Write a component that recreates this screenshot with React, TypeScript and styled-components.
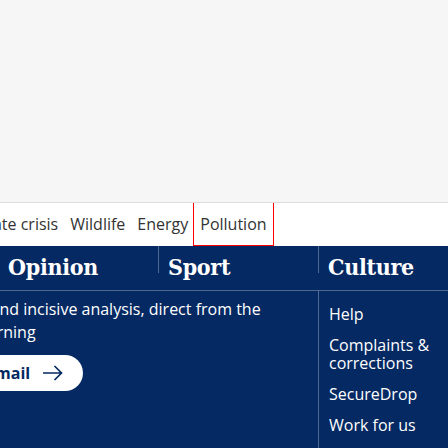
import React from "react";
import styled, { createGlobalStyle } from "styled-components";

const GlobalStyle = createGlobalStyle`
  html, body {
    margin: 0;
    padding: 0;
    background: #f6f6f6;
    overflow: hidden;
  }
  * { box-sizing: border-box; }
`;

const Page = styled.div`
  width: 448px;
  height: 448px;
  display: flex;
  flex-direction: column;
  overflow: hidden;
  font-family: "Open Sans", "Liberation Sans", Arial, sans-serif;
`;

const TopArea = styled.div`
  height: 202px;
  flex: none;
  background: #f6f6f6;
`;

const SubNav = styled.nav`
  flex: none;
  height: 44px;
  background: #ffffff;
  border-top: 1px solid #dcdcdc;
  overflow: hidden;
`;

const SubNavList = styled.ul`
  display: flex;
  margin: 0 0 0 -46px;
  padding: 0;
  list-style: none;
  height: 43px;
`;

const SubNavItem = styled.li<{ $focused?: boolean }>`
  flex: none;
  padding: 0 6px;
  height: 42px;
  line-height: 42px;
  font-size: 16px;
  color: #333333;
  white-space: nowrap;
  outline: ${(p) => (p.$focused ? "1px solid #ff0000" : "none")};
`;

const Footer = styled.footer`
  flex: 1;
  background: #052962;
  color: #ffffff;
  overflow: hidden;
`;

const PillarRow = styled.ul`
  display: grid;
  grid-template-columns: repeat(5, 160px);
  margin: 0 0 0 -162px;
  padding: 0;
  list-style: none;
`;

const Pillar = styled.li`
  padding: 7px 0 9px 10px;
  font-family: "DejaVu Serif Condensed", "DejaVu Serif", serif;
  font-stretch: condensed;
  font-weight: 700;
  font-size: 23px;
  line-height: 28px;
  letter-spacing: -0.3px;
  color: #ffffff;
  background: linear-gradient(#506991, #506991) left top / 1px 27px no-repeat;
`;

const FooterBody = styled.div`
  display: grid;
  grid-template-columns: 480px 160px 160px;
  margin-left: -162px;
  border-top: 1px solid #506991;
  min-height: 200px;
`;

const Signup = styled.div`
  padding: 7px 20px 0 16px;
`;

const SignupText = styled.p`
  margin: 0;
  font-size: 16px;
  line-height: 23px;
  color: #ffffff;
`;

const SignupButton = styled.button`
  margin-top: 11px;
  height: 36px;
  display: inline-flex;
  align-items: center;
  gap: 13px;
  padding: 0 20px 0 10px;
  border: none;
  border-radius: 18px;
  background: #ffffff;
  color: #052962;
  font-family: "Open Sans", "Liberation Sans", Arial, sans-serif;
  font-weight: 700;
  font-size: 16px;
  line-height: 20px;
`;

const LinkList = styled.ul`
  margin: 0;
  padding: 7px 0 0 10px;
  list-style: none;
  border-left: 1px solid #506991;
`;

const LinkItem = styled.li`
  padding: 7px 0 6px;
  font-size: 16px;
  line-height: 18px;
  color: #ffffff;
`;

const Arrow = () => (
  <svg width="20" height="16" viewBox="0 0 20 16" fill="none" stroke="#052962" strokeWidth="1.7">
    <path d="M0 8H18.5M11.5 1L18.5 8L11.5 15" />
  </svg>
);

export default function App() {
  return (
    <Page>
      <GlobalStyle />
      <TopArea />
      <SubNav>
        <SubNavList>
          <SubNavItem>Climate crisis</SubNavItem>
          <SubNavItem>Wildlife</SubNavItem>
          <SubNavItem>Energy</SubNavItem>
          <SubNavItem $focused>Pollution</SubNavItem>
        </SubNavList>
      </SubNav>
      <Footer>
        <PillarRow>
          <Pillar>News</Pillar>
          <Pillar>Opinion</Pillar>
          <Pillar>Sport</Pillar>
          <Pillar>Culture</Pillar>
          <Pillar>Lifestyle</Pillar>
        </PillarRow>
        <FooterBody>
          <Signup>
            <SignupText>
              Original reporting and incisive analysis, direct from the Guardian every morning
            </SignupText>
            <SignupButton>
              Sign up for our email
              <Arrow />
            </SignupButton>
          </Signup>
          <LinkList>
            <LinkItem>Help</LinkItem>
            <LinkItem>
              Complaints &amp;
              <br />
              corrections
            </LinkItem>
            <LinkItem>SecureDrop</LinkItem>
            <LinkItem>Work for us</LinkItem>
          </LinkList>
        </FooterBody>
      </Footer>
    </Page>
  );
}
